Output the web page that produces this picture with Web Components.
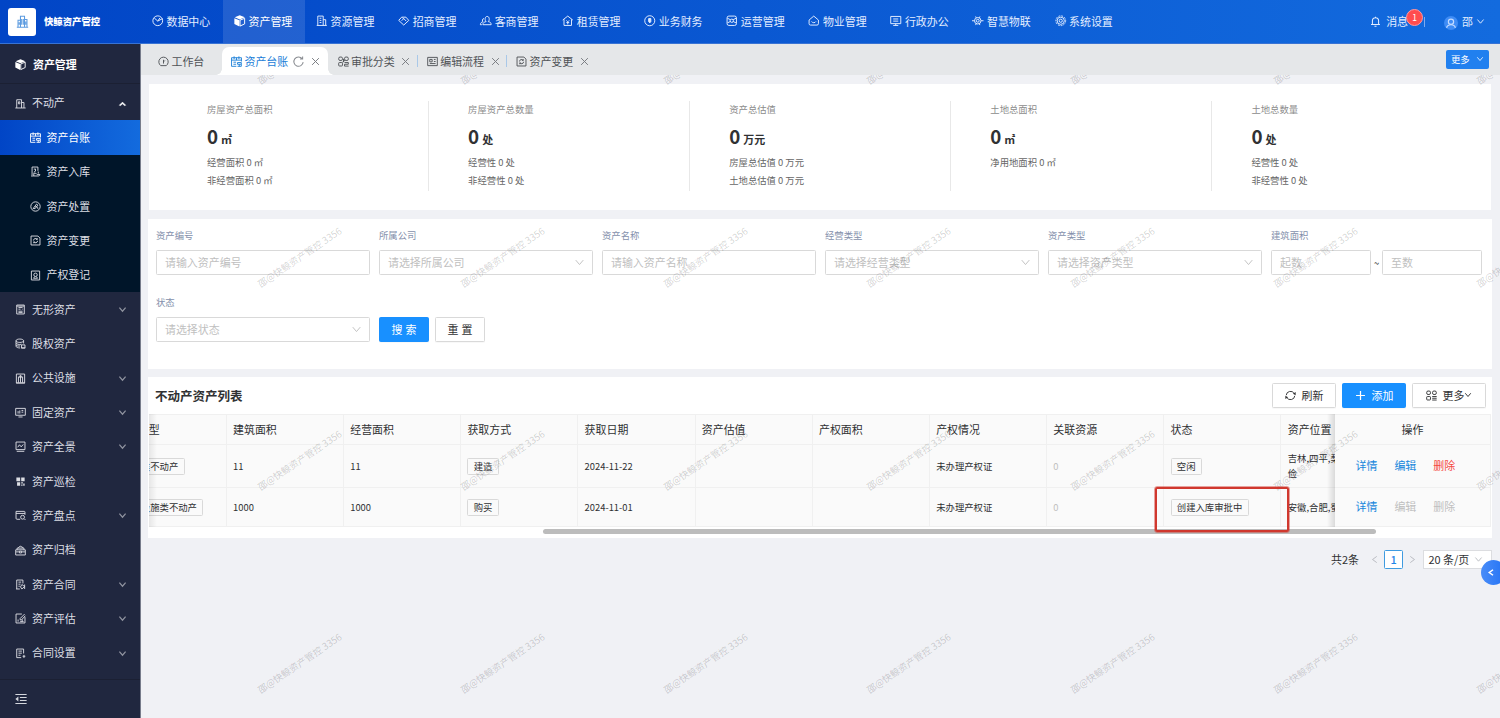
<!DOCTYPE html>
<html lang="zh-CN">
<head>
<meta charset="utf-8">
<title>快鲸资产管控</title>
<style>
html, body {
    margin: 0;
    height: 100%;
    overflow: hidden;
}
body {
    font-family: "Noto Sans CJK SC", "Noto Sans", sans-serif;
    font-size: 10.94px;
    color: #303133;
    background: #f0f1f5;
}
</style>
</head>
<body>
<asset-app></asset-app>

<script>
// 16x16 line icons
const ICONS = {
    logo: '<path d="M1 15h14M2.500 15V6.500h3M5.500 15V1.500h5V15M10.500 5.500h3V15M7 5v7M9 5v7M4 9v3M12 8v4"/>',
    pie: '<circle cx="8" cy="8" r="6.800"/><path d="M3 4l5 4.500 6.500-3.500M8 8.500L11 4"/>',
    cube: '<path fill="currentColor" stroke="none" d="M8 .5l7 2.800L8 6.200 1 3.300zM.5 4.500l7 2.900V16l-7-3.500z"/><path d="M8.400 7.200l6.400-2.600v7.800l-6.400 3z"/>',
    building: '<path d="M2.500 14.500V1.500h7.500v13M10 6.500h3.500v8M1 14.500h14M5 4.500h2.500M5 7.500h2.500M5 10.500h2.500"/>',
    estate: '<path d="M2.500 14.500V2.500h7v12M9.500 6.500H13v8M.5 14.500h15M5 5.500h2v3H5z"/>',
    shake: '<path d="M8 14L1 7.500 5 3h6l4 4.500zM5 8l3-3 3.500 3.500M8 5.500L6 3.500"/>',
    people: '<path d="M4 13.500h11.500c0-3-1.500-3.800-4-4.300 2-1.500 2-7.200-1.500-7.200s-3.500 5.700-1.500 7.200c-2.500.5-4.500 1.300-4.500 4.300M5.500 5C3 5 3 8.500 4 9.500c-2 .5-3.500 1.500-3.500 4h2"/>',
    house: '<path d="M1 7l7-5.500L15 7M2.800 6v8.500h10.400V6M6 7.500l2 2 2-2M8 9.500V13M6 10.500h4"/>',
    coin: '<circle cx="8" cy="8" r="7"/><path fill="currentColor" d="M6.500 5h3v4l-1.500 2-1.500-2z"/>',
    ops: '<path d="M4 1.500h8a2.500 2.500 0 0 1 2.500 2.500v8a2.500 2.500 0 0 1-2.500 2.500H4A2.500 2.500 0 0 1 1.500 12V4A2.500 2.500 0 0 1 4 1.500zM2 4.500l4 2M14 4.500l-4 2M2 11l4-2M14 11l-4-2"/><circle cx="8" cy="8" r="2.300"/>',
    home: '<path d="M1.500 7L8 1.500 14.500 7v5a2 2 0 0 1-2 2h-9a2 2 0 0 1-2-2zM5 9c1 2.300 5 2.300 6 0"/>',
    screen: '<path d="M1 2h14v10H1zM4.500 5.500h7M4.500 8.500h7M8 12v2.500M4.500 14.500h7"/>',
    iot: '<circle cx="8" cy="8" r="2"/><circle cx="8" cy="8" r="4.500"/><path d="M5 2l1 2M11 2l-1 2M0 8h3.500M12.500 8H16M5 14l1-2M11 14l-1-2"/>',
    gear: '<circle cx="8" cy="8" r="6.800" stroke-dasharray="2.500 1.500"/><circle cx="8" cy="8" r="5"/><circle cx="8" cy="8" r="2.200"/>',
    bell: '<path d="M1.500 12.500h13M3.500 12.500V7a4.500 4.500 0 0 1 9 0v5.500M8 1v1.500M6.500 15h3"/>',
    down: '<path d="M2.500 4.500L8 11l5.500-6.500"/>',
    up: '<path fill="currentColor" d="M3.500 10.500L8 6l4.500 4.500L11 11 8 8.500 5 11z"/>',
    left: '<path d="M12 2.500L4.500 8l7.500 5.500"/>',
    right: '<path d="M4 2.500L11.500 8 4 13.500"/>',
    close: '<path d="M2 2l12 12M14 2L2 14"/>',
    reload: '<path d="M13.300 3.800A6.800 6.800 0 1 0 14.800 9M14 .8v3.700h-3.800"/>',
    refresh: '<path d="M1.800 7.500A6.200 6.200 0 0 1 13.300 5M14.200 8.500A6.200 6.200 0 0 1 2.700 11"/><path fill="currentColor" stroke="none" d="M15.500 3v4.500l-4-2zM.5 13V8.500l4 2z"/>',
    plus: '<path d="M8 1.500v13M1.500 8h13"/>',
    ledger: '<path d="M.8 15V2.500h14.400V8M.8 15h7M.8 6h14.400M4.500 .5v4M8 2.500V6M11.500 .5v4M3.500 9h4M3.500 12h4M9.500 9.500H15v2.500H9.500zM9.500 15H15v-3M12 12v3"/>',
    storage: '<path d="M3 13.500V1.500h8.500V7M5.500 4.500h3M8 4.500v3L5.500 9M1.500 14.500h4M5.500 10.500h3l2 2h4c0 1.500-1.500 2-3 2H5.500zM12 8v3"/>',
    dispose: '<circle cx="8" cy="8" r="6.800"/><path d="M4.500 11l5-6.500 2 1.500-4 5M7.500 8.500c2-1 4 0 4 3M4.500 11h3"/>',
    change: '<path d="M1.500 1.500h10l3 3v10h-13zM5 8a3 3 0 0 1 5.500-1.500M11 8.500A3 3 0 0 1 5.500 10M10.500 4.500v2H9M5.500 12v-2H7"/>',
    register: '<path d="M2 1.500h12v13H2zM5 12h6M5.500 7a2.500 2.500 0 1 1 5 0 2.500 2.500 0 1 1-5 0zM7 9.500L5 12M9 9.500l2 2.500"/>',
    list: '<path d="M2.500 1.500h11v13h-11zM5 5h6M5 7.500h3M10 7.500h1M5 10.500h6M5 12.500h6M2.500 3h11"/>',
    stack: '<path d="M1.500 4c0-3.300 11-3.300 11 0s-11 3.300-11 0v8c0 1.500 3 2.500 6 2.500M12.500 4v4M1.500 7c0 2 5 3 8 2M1.500 10c0 1.500 4 2 6 1.500M9.500 10h5v4.500h-5zM9 14.500h6"/>',
    facility: '<path d="M2 1.500h12v13H2zM5 14V6h6v8M8 3.500V14M5 6l3-2.500L11 6M1.500 14.500h13"/>',
    monitor: '<path d="M1 2h14v10H1zM4.500 9.500V6M7 5v4.500M9.500 5h2.500M9.500 7.500h2.500M5 14.500h6"/>',
    chart: '<path d="M1.500 1.500h13v11h-13zM4 9l2.500-3.500L9 8.500 12 5M2.500 15h11"/>',
    patrol: '<path fill="currentColor" stroke="none" d="M2 2h5.500v5.500H2zM9 2h5v5.500H9zM3 9h4.500v5H3zM9 9h2.500v2H9zM12 11h2v3h-2zM9 12.500h2V14H9z"/>',
    check: '<path d="M7.500 13.500H3a1.500 1.500 0 0 1-1.500-1.500V2h12a1 1 0 0 1 1 1V7M1.500 5h13M14.500 13v1.500"/><circle cx="11" cy="10.500" r="2.800"/>',
    archive: '<path d="M1 7h14v7.500H1zM3 7V4.500h10V7M4.500 4.500l3-3L12 4M1.500 10h5M9.500 10h5M6.500 9h3v2.500h-3z"/>',
    contract: '<path d="M2.500 14.500V1.500h9v5M5 4.500h4M5 7.500h3M1.500 14.500H7M5 10.500h2M10 8l4 3-4 3.500-2-3zM14 8v6.500"/>',
    rate: '<path d="M10 1.500H1.500v13h13V6M14 1.500L7.500 8v2h2L15 4M4.500 12.500v-3M7.500 12.500h5M10.500 12V9.500"/>',
    setting: '<path d="M9 14H2.500V1.500h10V8M5 4.500h5M5 7.500h5M5 10.500h3M11 12h4M13 10v4.500"/>',
    fold: '<path d="M.5 2h15M6.500 6h9M6.500 10h9M.5 14h15"/><path fill="currentColor" stroke="none" d="M.5 8l4-3.300v6.600z"/>',
    gauge: '<path d="M4 14a6.800 6.800 0 1 1 8 0zM8 11V5.500M8 8.500l2-2"/>',
    blocks: '<rect x="1" y="1.500" width="5.500" height="5" rx="2"/><rect x="9.500" y="1.500" width="5.500" height="5" rx="2"/><rect x="1" y="9.500" width="5.500" height="5" rx="1"/><path d="M8 4v5M9.500 9.500H15v2.500H9.500v2.700h6M6.500 9l4-3"/>',
    flow: '<path d="M1 2h14v12H1zM4 5h3.500v3.500H4zM10 5h2.500M10 8h2.500M4 11h8.500"/>',
    grid: '<rect x="1" y="1.500" width="5.500" height="5" rx="2"/><rect x="9.500" y="1.500" width="5.500" height="5" rx="2"/><rect x="1" y="9.500" width="5.500" height="5" rx="1"/><path d="M9 9.500h6.500M9 12h6.500M9 14.600h6.500"/>',
    avatar: '<circle cx="8" cy="8" r="8" fill="#3f8cf5" stroke="none"/><path stroke="#c5dcff" d="M3 13.500c.5-3 2-3.500 5-3.500s4.500.5 5 3.500"/><circle cx="8" cy="6.500" r="3" stroke="#c5dcff"/>'
};

class BaseElement extends HTMLElement {
    constructor() {
        super();
        this.attachShadow({mode: 'open'});
    }

    connectedCallback() {
        this.shadowRoot.innerHTML = `<style>${this.styles()}</style>${this.render()}`;
    }

    attr(name, def = '') {
        return this.getAttribute(name) ?? def;
    }
}

class AppIcon extends BaseElement {
    styles() {
        return `
        :host { display: inline-flex; flex: none; width: 11px; height: 11px; }
        svg { width: 100%; height: 100%; display: block; overflow: visible; }`;
    }

    render() {
        return `<svg viewBox="0 0 16 16" fill="none" stroke="currentColor" stroke-width="${this.attr('weight', '1.35')}">${ICONS[this.attr('name')]}</svg>`;
    }
}
customElements.define('app-icon', AppIcon);

class NavItem extends BaseElement {
    styles() {
        return `
        :host { display: flex; align-items: center; gap: 3px; width: 82.05px; box-sizing: border-box; padding: 0 0 1px 11px; color: #e3edff; white-space: nowrap; }
        :host([active]) { background: rgba(255,255,255,.12); color: #fff; }
        app-icon { width: 11.5px; height: 11.5px; }`;
    }

    render() {
        return `<app-icon name="${this.attr('icon')}"></app-icon><slot></slot>`;
    }
}
customElements.define('nav-item', NavItem);

class TopHeader extends BaseElement {
    styles() {
        return `
        :host { display: flex; flex: none; height: 44px; box-sizing: border-box; border-bottom: 1px solid #3873d4; background: linear-gradient(90deg, #0145c6, #136bde); color: #e3edff; }
        .brand { display: flex; align-items: center; width: 141px; padding-left: 8px; box-sizing: border-box; gap: 8px; font-size: 9.375px; font-weight: 700; color: #fff; }
        .brand b { margin-top: -1px; }
        .logo { display: flex; align-items: center; justify-content: center; width: 28px; height: 28px; border-radius: 3px; background: #fff; color: #5c9be0; }
        .logo app-icon { width: 13px; height: 13px; }
        nav { display: flex; flex: 1; }
        .right { display: flex; align-items: center; padding-right: 15px; }
        .msg { position: relative; margin: -1px 0 0 5px; }
        .badge { position: absolute; left: 20px; top: -4px; width: 15px; height: 15px; border: 1px solid #ff9aa0; border-radius: 50%; background: #ff4d4f; color: #fff; font-size: 8.500px; line-height: 15px; text-align: center; }
        .line { width: 1px; height: 10px; margin: 0 19px 0 16px; background: #7eabee; }
        .name { margin: -1px 3px 0 4px; }`;
    }

    render() {
        const items = [['pie', '数据中心'], ['cube', '资产管理'], ['building', '资源管理'], ['shake', '招商管理'],
            ['people', '客商管理'], ['house', '租赁管理'], ['coin', '业务财务'], ['ops', '运营管理'],
            ['home', '物业管理'], ['screen', '行政办公'], ['iot', '智慧物联'], ['gear', '系统设置']];
        return `
        <div class="brand"><span class="logo"><app-icon name="logo" weight="1.3"></app-icon></span><b>快鲸资产管控</b></div>
        <nav>${items.map(([icon, text], i) => `<nav-item icon="${icon}" ${i === 1 ? 'active' : ''}>${text}</nav-item>`).join('')}</nav>
        <div class="right">
            <app-icon name="bell" weight="1.5"></app-icon>
            <span class="msg">消息<span class="badge">1</span></span>
            <span class="line"></span>
            <app-icon name="avatar" style="width:14px;height:14px;margin-top:2px"></app-icon>
            <span class="name">邵</span>
            <app-icon name="down" weight="1.7" style="width:9px;height:9px"></app-icon>
        </div>`;
    }
}
customElements.define('top-header', TopHeader);

class MenuItem extends BaseElement {
    styles() {
        return `
        :host { display: flex; align-items: center; gap: 6px; height: 34.375px; padding: 0 13px 0 15px; color: #dcdee4; }
        :host([sub]) { padding-left: 29.500px; background: #001529; }
        :host([active]) { background: linear-gradient(90deg, #0145c6, #136bde); color: #fff; }
        span { flex: 1; margin-top: -1.500px; }
        .arrow { width: 9px; height: 9px; color: #8f939f; }
        .arrow[name=up] { color: #fff; width: 11px; height: 11px; margin-right: -1px; }`;
    }

    render() {
        const arrow = this.attr('arrow');
        return `<app-icon name="${this.attr('icon')}"></app-icon><span><slot></slot></span>
        ${arrow ? `<app-icon class="arrow" name="${arrow}" weight="${arrow === 'up' ? 1 : 2.2}"></app-icon>` : ''}`;
    }
}
customElements.define('menu-item', MenuItem);

class SideMenu extends BaseElement {
    styles() {
        return `
        :host { display: flex; flex-direction: column; flex: none; width: 141px; box-sizing: border-box; background: #20273f; border-right: 1px solid #777c8b; }
        .title { display: flex; align-items: center; gap: 7px; height: 40px; padding: 1px 0 0 15px; box-sizing: border-box; border-bottom: 1px solid #1b2033; margin-bottom: 2px; color: #fff; font-weight: 700; }
        .foot { display: flex; align-items: center; flex: 1; margin-top: 9px; padding-left: 15px; border-top: 1px solid #1b2033; color: #d3d6dd; }
        .foot app-icon { width: 12px; height: 12px; }`;
    }

    render() {
        const items = [['estate', '不动产', 'up'], ['ledger', '资产台账', '', 'sub active'], ['storage', '资产入库', '', 'sub'],
            ['dispose', '资产处置', '', 'sub'], ['change', '资产变更', '', 'sub'], ['register', '产权登记', '', 'sub'],
            ['list', '无形资产', 'down'], ['stack', '股权资产', ''], ['facility', '公共设施', 'down'], ['monitor', '固定资产', 'down'],
            ['chart', '资产全景', 'down'], ['patrol', '资产巡检', ''], ['check', '资产盘点', 'down'], ['archive', '资产归档', ''],
            ['contract', '资产合同', 'down'], ['rate', '资产评估', 'down'], ['setting', '合同设置', 'down']];
        return `
        <div class="title"><app-icon name="cube"></app-icon>资产管理</div>
        ${items.map(([icon, text, arrow, flags = '']) => `<menu-item icon="${icon}" arrow="${arrow}" ${flags}>${text}</menu-item>`).join('')}
        <div class="foot"><app-icon name="fold" weight="1.6"></app-icon></div>`;
    }
}
customElements.define('side-menu', SideMenu);

class TabItem extends BaseElement {
    styles() {
        return `
        :host { display: flex; align-items: center; height: 28px; padding-right: 7px; color: #4f5256; white-space: nowrap; box-sizing: border-box; }
        :host([active]) { position: relative; width: 106px; padding-left: 9px; background: #fff; border-radius: 7px 7px 0 0; color: #1c80d8; }
        :host([active])::before, :host([active])::after { content: ""; position: absolute; bottom: 0; width: 6px; height: 6px; background: radial-gradient(circle at 0 0, transparent 5.5px, #fff 6px); left: -6px; }
        :host([active])::after { left: auto; right: -6px; background: radial-gradient(circle at 100% 0, transparent 5.5px, #fff 6px); }
        .text { margin: -1px 0 0 2.5px; }
        .reload { margin-left: 5px; color: #8a8d92; }
        .close { width: 9px; height: 9px; margin-left: 6.500px; color: #777a7f; }`;
    }

    render() {
        return `<app-icon name="${this.attr('icon')}"></app-icon><span class="text"><slot></slot></span>
        ${this.hasAttribute('active') ? '<app-icon class="reload" name="reload" weight="1.5"></app-icon>' : ''}
        ${this.hasAttribute('fixed') ? '' : '<app-icon class="close" name="close" weight="1.7"></app-icon>'}`;
    }
}
customElements.define('tab-item', TabItem);

class TabBar extends BaseElement {
    styles() {
        return `
        :host { display: flex; align-items: flex-end; flex: none; height: 31px; padding: 0 11px 0 17px; background: #e5e7e9; }
        .sep { width: 1px; height: 12px; margin: 0 9px 8px -.5px; background: #a9c8e8; }
        .more { display: flex; align-items: center; justify-content: space-between; width: 43px; height: 19px; box-sizing: border-box; margin: 0 0 6px auto; padding: 0 5px 1px 5px; border-radius: 2px; background: #2180ef; color: #fff; font-size: 9.375px; }
        .more app-icon { width: 8px; height: 8px; }`;
    }

    render() {
        return `
        <tab-item icon="gauge" fixed style="width:64px">工作台</tab-item>
        <tab-item icon="ledger" active>资产台账</tab-item>
        <tab-item icon="blocks" style="margin-left:9.500px">审批分类</tab-item><i class="sep"></i>
        <tab-item icon="flow">编辑流程</tab-item><i class="sep"></i>
        <tab-item icon="change">资产变更</tab-item>
        <div class="more">更多<app-icon name="down" weight="1.6"></app-icon></div>`;
    }
}
customElements.define('tab-bar', TabBar);

class StatItem extends BaseElement {
    styles() {
        return `
        :host { display: block; flex: 1; height: 90px; padding-left: 39px; box-sizing: border-box; border-right: 1px solid #e8e8e8; font-size: 9.375px; color: #666; }
        :host(:last-of-type) { border-right: 0; }
        .label { line-height: 16px; color: #8c8c8c; }
        .value { display: flex; align-items: baseline; gap: 3px; height: 33px; line-height: 37px; font-size: 18.75px; font-weight: 700; color: #303133; }
        .value small { font-size: 10.94px; }
        .sub { line-height: 18.300px; padding-top: 2.500px; }`;
    }

    render() {
        return `<div class="label">${this.attr('label')}</div>
        <div class="value">0<small>${this.attr('unit')}</small></div>
        <div class="sub"><slot></slot></div>`;
    }
}
customElements.define('stat-item', StatItem);

class StatCard extends BaseElement {
    styles() {
        return `:host { display: flex; flex: none; height: 126px; margin: 9px 9px 0 8px; padding: 17px 18.500px 0 19px; box-sizing: border-box; background: #fff; }`;
    }

    render() {
        return `
        <stat-item label="房屋资产总面积" unit="㎡">经营面积 0 ㎡<br>非经营面积 0 ㎡</stat-item>
        <stat-item label="房屋资产总数量" unit="处">经营性 0 处<br>非经营性 0 处</stat-item>
        <stat-item label="资产总估值" unit="万元">房屋总估值 0 万元<br>土地总估值 0 万元</stat-item>
        <stat-item label="土地总面积" unit="㎡">净用地面积 0 ㎡</stat-item>
        <stat-item label="土地总数量" unit="处">经营性 0 处<br>非经营性 0 处</stat-item>`;
    }
}
customElements.define('stat-card', StatCard);

class UiButton extends BaseElement {
    styles() {
        return `
        :host { display: inline-flex; align-items: center; justify-content: center; height: 25px; box-sizing: border-box; padding-bottom: 1px; border: 1px solid #d9d9d9; border-radius: 1.5px; background: #fff; color: #303133; white-space: nowrap; box-shadow: 0 1px 1px rgba(0,0,0,.03); }
        :host([primary]) { background: #1890ff; border-color: #1890ff; color: #fff; }`;
    }

    render() {
        return `<slot></slot>`;
    }
}
customElements.define('ui-button', UiButton);

class FormField extends BaseElement {
    styles() {
        return `
        :host { display: block; width: 214px; }
        label { display: block; height: 16px; margin-bottom: 7px; line-height: 16px; font-size: 9.375px; color: #8490ab; }
        .row { display: flex; align-items: center; justify-content: space-between; font-size: 9.375px; }
        .box { display: flex; flex: 1; align-items: center; justify-content: space-between; height: 25px; box-sizing: border-box; padding: 0 7px 1px 8px; border: 1px solid #d9d9d9; border-radius: 1.5px; background: #fff; color: #bfbfbf; font-size: 10.94px; }
        .range .box { flex: none; width: 100px; }
        .range { width: 211px; }
        app-icon { width: 11px; height: 11px; color: #bfbfbf; }`;
    }

    render() {
        const type = this.attr('type', 'input');
        const body = type === 'range'
            ? `<div class="row range"><div class="box">起数</div>~<div class="box">至数</div></div>`
            : `<div class="row"><div class="box">${this.attr('hint')}${type === 'select' ? '<app-icon name="down"></app-icon>' : ''}</div></div>`;
        return `<label>${this.attr('label')}</label>${body}`;
    }
}
customElements.define('form-field', FormField);

class SearchForm extends BaseElement {
    styles() {
        return `
        :host { display: grid; grid-template-columns: repeat(6, 214px); gap: 19px 9px; align-content: start; flex: none; height: 150px; margin: 9px 8px 0 7px; padding: 8px 0 0 8px; box-sizing: border-box; background: #fff; }
        .actions { display: flex; align-items: flex-end; gap: 6px; }
        ui-button { width: 50px; letter-spacing: 3px; text-indent: 3px; }`;
    }

    render() {
        return `
        <form-field label="资产编号" hint="请输入资产编号"></form-field>
        <form-field label="所属公司" type="select" hint="请选择所属公司"></form-field>
        <form-field label="资产名称" hint="请输入资产名称"></form-field>
        <form-field label="经营类型" type="select" hint="请选择经营类型"></form-field>
        <form-field label="资产类型" type="select" hint="请选择资产类型"></form-field>
        <form-field label="建筑面积" type="range"></form-field>
        <form-field label="状态" type="select" hint="请选择状态"></form-field>
        <div class="actions"><ui-button primary>搜索</ui-button><ui-button>重置</ui-button></div>`;
    }
}
customElements.define('search-form', SearchForm);

class AssetTable extends BaseElement {
    styles() {
        return `
        :host { display: block; flex: none; height: 161px; margin: 8px 8px 0 7px; background: #fff; overflow: hidden; }
        .bar { display: flex; align-items: center; gap: 6px; height: 37px; padding: 0 6px 0 7px; box-sizing: border-box; }
        h3 { flex: 1; margin: 0; font-size: 12.5px; }
        .refresh, .add { width: 64px; gap: 6px; }
        .more { width: 74px; }
        .more app-icon:first-child { margin-right: 6px; }
        .more app-icon:last-child { width: 8px; height: 8px; }
        .table { position: relative; display: flex; height: 113px; margin: 0 1px; overflow: hidden; }
        .scroll { flex: 1; overflow: hidden; }
        table { table-layout: fixed; width: 1289.09px; margin-left: -39.400px; border-collapse: separate; border-spacing: 0; background: #fafafa; }
        th, td { box-sizing: border-box; padding: 0 6.250px; border-right: 1px solid #f0f0f0; border-bottom: 1px solid #f0f0f0; text-align: left; font-size: 9.375px; line-height: 14.700px; white-space: nowrap; overflow: hidden; }
        th { height: 31px; padding-bottom: 1px; border-top: 1px solid #f0f0f0; font-size: 10.94px; font-weight: 400; }
        .r1 td { height: 43px; }
        .r2 td { height: 39px; }
        .tag { display: inline-block; height: 17px; box-sizing: border-box; padding: 0 5.250px; border: 1px solid #d9d9d9; border-radius: 1.5px; line-height: 15.500px; vertical-align: middle; }
        .mute { color: #bfbfbf; }
        .fixed { position: relative; flex: none; width: 156px; }
        .fixed table { width: 156px; margin: 0; }
        .fixed th { text-align: center; }
        .fixed td { font-size: 10.94px; padding: 0 0 1px 20.500px; }
        .fixed td span { margin-right: 17px; color: #1786dc; }
        .fixed td .danger { color: #f5483f; margin: 0; }
        .fixed td .off { color: #bfbfbf; }
        .fixed::before, .table::before { content: ""; position: absolute; z-index: 1; top: 0; bottom: 0; left: -8px; width: 8px; background: linear-gradient(90deg, transparent, rgba(0,0,0,.13)); }
        .table::before { left: 0; background: linear-gradient(270deg, transparent, rgba(0,0,0,.08)); }
        .thumb { width: 833px; height: 5px; margin: 2px 0 0 395px; border-radius: 3px; background: #bcbcbc; }
        .mark { position: absolute; left: 1155px; top: 487px; width: 134px; height: 45px; box-sizing: border-box; border: 2px solid #d0382e; outline: .5px solid rgba(208,56,46,.45); border-radius: 2px; z-index: 3; }`;
    }

    render() {
        const heads = ['资产类型', '建筑面积', '经营面积', '获取方式', '获取日期', '资产估值', '产权面积', '产权情况', '关联资源', '状态', '资产位置'];
        const tag = text => `<span class="tag">${text}</span>`;
        const rows = [
            [tag('经营类不动产'), '11', '11', tag('建造'), '2024-11-22', '', '', '未办理产权证', '<span class="mute">0</span>', tag('空闲'), '吉林,四平,梨<br>俭'],
            [tag('公共设施类不动产'), '1000', '1000', tag('购买'), '2024-11-01', '', '', '未办理产权证', '<span class="mute">0</span>', tag('创建入库审批中'), '安徽,合肥,蜀']
        ];
        return `
        <div class="bar">
            <h3>不动产资产列表</h3>
            <ui-button class="refresh"><app-icon name="refresh"></app-icon>刷新</ui-button>
            <ui-button class="add" primary><app-icon name="plus" weight="1.8"></app-icon>添加</ui-button>
            <ui-button class="more"><app-icon name="grid"></app-icon>更多<app-icon name="down" weight="1.9"></app-icon></ui-button>
        </div>
        <div class="table">
            <div class="scroll"><table>
                <tr>${heads.map(h => `<th>${h}</th>`).join('')}</tr>
                ${rows.map((r, i) => `<tr class="r${i + 1}">${r.map(c => `<td>${c}</td>`).join('')}</tr>`).join('')}
            </table></div>
            <div class="fixed"><table>
                <tr><th>操作</th></tr>
                <tr class="r1"><td><span>详情</span><span>编辑</span><span class="danger">删除</span></td></tr>
                <tr class="r2"><td><span>详情</span><span class="off">编辑</span><span class="danger off">删除</span></td></tr>
            </table></div>
        </div>
        <div class="thumb"></div>
        <div class="mark"></div>`;
    }
}
customElements.define('asset-table', AssetTable);

class PagePager extends BaseElement {
    styles() {
        return `
        :host { display: flex; align-items: center; justify-content: flex-end; flex: none; height: 19px; margin: 12px 8px 0 0; }
        .total { margin-top: -1px; }
        app-icon { width: 9px; height: 9px; color: #a9acb2; }
        .cur { width: 19px; height: 19px; box-sizing: border-box; margin: 0 5px; border: 1px solid #3f9be0; border-radius: 1.5px; background: #fff; color: #1f87e8; font-weight: 500; line-height: 16px; text-align: center; }
        .size { display: flex; align-items: center; justify-content: space-between; width: 69px; height: 19px; box-sizing: border-box; margin-left: 6px; padding: 0 8px 1px 4.500px; border: 1px solid #dcdde0; background: #fff; white-space: nowrap; }`;
    }

    render() {
        return `<span class="total">共2条</span><app-icon name="left" style="margin-left:11px"></app-icon><span class="cur">1</span><app-icon name="right"></app-icon>
        <div class="size">20 条/页<app-icon name="down"></app-icon></div>`;
    }
}
customElements.define('page-pager', PagePager);

class WaterMark extends BaseElement {
    styles() {
        return `
        :host { position: absolute; left: 141px; top: 75px; right: 0; bottom: 0; overflow: hidden; pointer-events: none; z-index: 2; }
        .tiles { display: grid; grid-template: repeat(4, 203.125px) / repeat(7, 203.125px); margin: -122.500px 0 0 56.800px; }
        span { place-self: center; transform: rotate(-34deg); white-space: nowrap; font-size: 9.500px; line-height: 12px; color: rgba(0,0,0,.19); }`;
    }

    render() {
        return `<div class="tiles">${'<span>邵@快鲸资产管控 3356</span>'.repeat(28)}</div>`;
    }
}
customElements.define('water-mark', WaterMark);

class AssetApp extends BaseElement {
    styles() {
        return `
        :host { position: relative; display: flex; flex-direction: column; width: 1500px; height: 718px; overflow: hidden; }
        .body { display: flex; flex: 1; min-height: 0; }
        main { display: flex; flex-direction: column; flex: 1; min-width: 0; }
        .float { position: absolute; left: 1481px; top: 560px; display: flex; align-items: center; width: 25px; height: 25px; padding-left: 6px; box-sizing: border-box; border-radius: 50%; background: linear-gradient(90deg, #4a8df8, #2272f5); color: #fff; z-index: 4; }
        .float app-icon { width: 8px; height: 11px; }`;
    }

    render() {
        return `
        <top-header></top-header>
        <div class="body">
            <side-menu></side-menu>
            <main>
                <tab-bar></tab-bar>
                <stat-card></stat-card>
                <search-form></search-form>
                <asset-table></asset-table>
                <page-pager></page-pager>
            </main>
        </div>
        <water-mark></water-mark>
        <div class="float"><app-icon name="left" weight="3"></app-icon></div>`;
    }
}
customElements.define('asset-app', AssetApp);
</script>
</body>
</html>
